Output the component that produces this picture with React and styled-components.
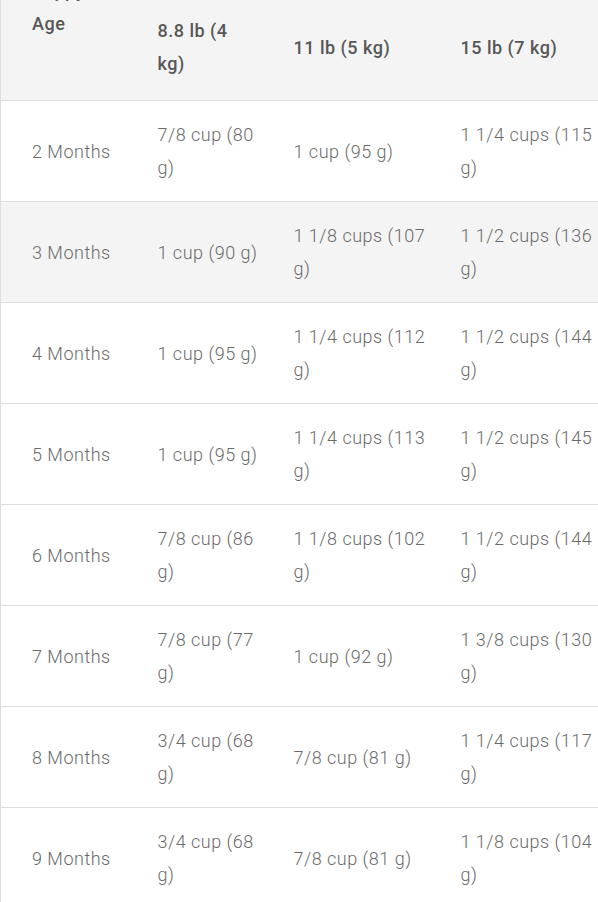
import React from 'react';
import styled, { createGlobalStyle } from 'styled-components';

const weights = ['8.8 lb (4 kg)', '11 lb (5 kg)', '15 lb (7 kg)'];

const rows = [
  { age: '2 Months', amounts: ['7/8 cup (80 g)', '1 cup (95 g)', '1 1/4 cups (115 g)'] },
  { age: '3 Months', amounts: ['1 cup (90 g)', '1 1/8 cups (107 g)', '1 1/2 cups (136 g)'], shaded: true },
  { age: '4 Months', amounts: ['1 cup (95 g)', '1 1/4 cups (112 g)', '1 1/2 cups (144 g)'] },
  { age: '5 Months', amounts: ['1 cup (95 g)', '1 1/4 cups (113 g)', '1 1/2 cups (145 g)'] },
  { age: '6 Months', amounts: ['7/8 cup (86 g)', '1 1/8 cups (102 g)', '1 1/2 cups (144 g)'] },
  { age: '7 Months', amounts: ['7/8 cup (77 g)', '1 cup (92 g)', '1 3/8 cups (130 g)'] },
  { age: '8 Months', amounts: ['3/4 cup (68 g)', '7/8 cup (81 g)', '1 1/4 cups (117 g)'] },
  { age: '9 Months', amounts: ['3/4 cup (68 g)', '7/8 cup (81 g)', '1 1/8 cups (104 g)'] },
];

export default function App() {
  return (
    <>
      <GlobalStyle />
      <Page>
        <FeedingTable>
          <colgroup>
            <Col width={126} />
            <Col width={136} />
            <Col width={167} />
            <Col width={169} />
          </colgroup>
          <thead>
            <tr>
              <HeadCell $top>
                <AgeLabel>Puppy Age</AgeLabel>
              </HeadCell>
              {weights.map(w => (
                <HeadCell key={w}>{w}</HeadCell>
              ))}
            </tr>
          </thead>
          <tbody>
            {rows.map(row => (
              <Row key={row.age} $shaded={row.shaded}>
                <Cell>{row.age}</Cell>
                {row.amounts.map((a, i) => (
                  <Cell key={i}>{a}</Cell>
                ))}
              </Row>
            ))}
          </tbody>
        </FeedingTable>
      </Page>
    </>
  );
}

const GlobalStyle = createGlobalStyle`
  html, body {
    margin: 0;
    padding: 0;
    background: #fff;
    overflow: hidden;
  }
  body {
    font-family: Roboto, "Liberation Sans", sans-serif;
  }
`;

const Page = styled.div`
  width: 598px;
  height: 902px;
  overflow: hidden;
`;

const FeedingTable = styled.table`
  width: 598px;
  margin-top: -7px;
  border-collapse: collapse;
  table-layout: fixed;
  font-size: 18px;
  line-height: 33px;
  letter-spacing: 0.5px;
`;

const Col = styled.col`
  width: ${props => props.width}px;
`;

const HeadCell = styled.th`
  background: #f4f4f4;
  color: #575757;
  font-weight: 500;
  text-align: left;
  vertical-align: ${props => (props.$top ? 'top' : 'middle')};
  padding: 20px 14px 20px 31px;
  border: 1px solid #dddddd;
  border-left: none;
  border-right: none;
  &:first-child { border-left: 1px solid #dddddd; }
  &:last-child { border-right: 1px solid #dddddd; }
`;

const AgeLabel = styled.span`
  display: block;
  width: 60px;
  margin-top: -40px;
`;

const Row = styled.tr`
  background: ${props => (props.$shaded ? '#f4f4f4' : '#fff')};
`;

const Cell = styled.td`
  color: #6a6a6a;
  font-weight: 300;
  vertical-align: middle;
  padding: 17px 0 17px 31px;
  border-top: 1px solid #dddddd;
  border-bottom: 1px solid #dddddd;
  &:first-child { border-left: 1px solid #dddddd; }
  &:last-child { border-right: 1px solid #dddddd; }
`;
